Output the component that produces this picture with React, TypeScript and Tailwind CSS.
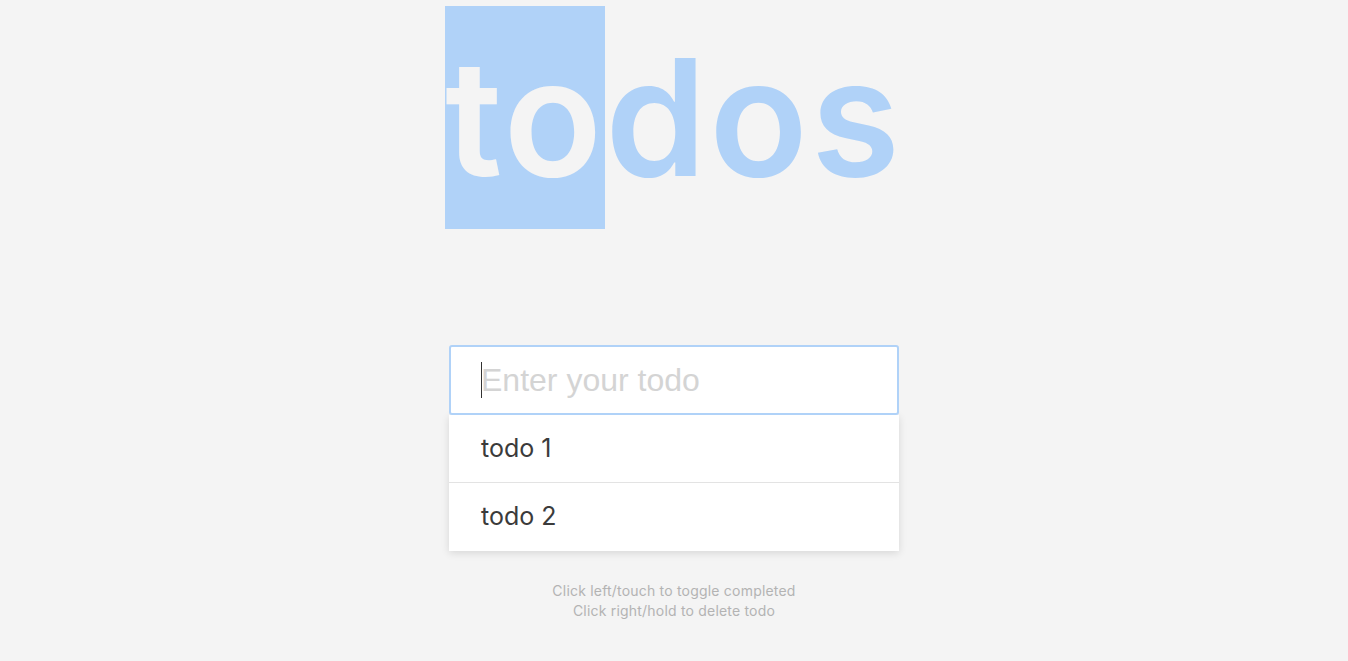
import React, { useState } from "react";

const todosSeed = ["todo 1", "todo 2"];

function App() {
  const [todos] = useState(todosSeed);

  return (
    <div className="min-h-screen bg-[#f4f4f4] flex flex-col items-center font-['Inter','Noto_Sans',sans-serif]">
      <h1 className="mt-[6px] text-[162px] leading-[223px] font-semibold tracking-[3px] text-[#b0d2f8]">
        <span className="inline-block bg-[#b0d2f8] text-[#f4f4f4]">to</span>
        dos
      </h1>

      <div className="mt-[116px] w-[450px]">
        <div className="relative">
          <input
            autoFocus
            placeholder="Enter your todo"
            className="block w-full h-[70px] bg-white border-2 border-[#b0d2f8] rounded-[3px] pl-[30px] font-['Liberation_Sans',Arial,sans-serif] text-[32px] text-[#3d3d3d] placeholder:text-[#d4d4d4] outline-none caret-transparent"
          />
          {/* fake caret, the headless shot drops the real one */}
          <span className="absolute left-[32px] top-[17px] h-[36px] w-px bg-[#333]" />
        </div>
        <ul className="bg-white shadow-[0_2px_8px_rgba(0,0,0,0.12)]">
          {todos.map((t, i) => (
            <li
              key={t}
              className={`h-[68px] flex items-center pl-[32px] text-[25px] text-[#3b3b3b] ${
                i < todos.length - 1 ? "border-b border-[#e3e3e3]" : ""
              }`}
            >
              {t}
            </li>
          ))}
        </ul>
      </div>

      <div className="mt-[30px] text-center text-[14px] leading-[20px] tracking-[0.2px] text-[#b3b3b3]">
        <p>Click left/touch to toggle completed</p>
        <p>Click right/hold to delete todo</p>
      </div>
    </div>
  );
}

export default App;
